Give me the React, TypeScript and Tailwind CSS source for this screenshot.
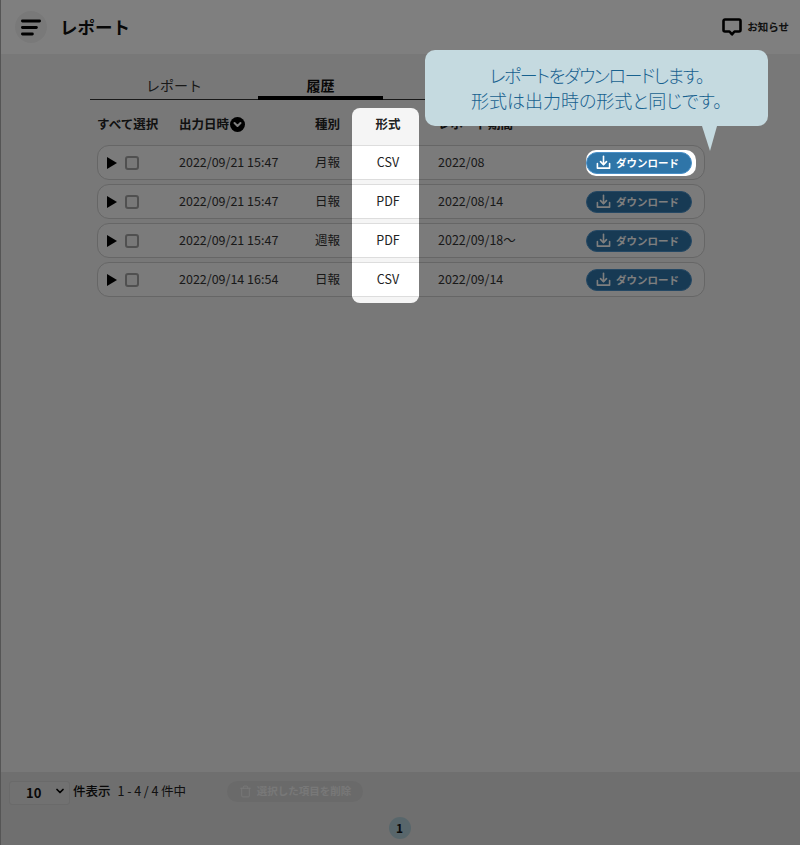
import React from 'react';
import { ChevronDown, Trash } from 'lucide-react';

const rows = [
  { date: '2022/09/21 15:47', kind: '月報', format: 'CSV', period: '2022/08' },
  { date: '2022/09/21 15:47', kind: '日報', format: 'PDF', period: '2022/08/14' },
  { date: '2022/09/21 15:47', kind: '週報', format: 'PDF', period: '2022/09/18〜' },
  { date: '2022/09/14 16:54', kind: '日報', format: 'CSV', period: '2022/09/14' },
];

const DownloadIcon = () => (
  <svg width="15" height="15" viewBox="0 0 16 16" fill="none" stroke="currentColor" strokeWidth="1.7" strokeLinecap="round" strokeLinejoin="round">
    <path d="M1.5 9v5h13V9" />
    <path d="M8 1.5v8.5" />
    <path d="M4.8 7L8 10.2 11.2 7" />
  </svg>
);

const DownloadButton = () => (
  <button className="flex h-[22px] w-[106px] items-center justify-center gap-[5px] rounded-full border border-[#4a90c8] bg-[#2f75a8] pr-[3px] text-[10.5px] font-bold text-white">
    <DownloadIcon />
    ダウンロード
  </button>
);

const App: React.FC = () => {
  return (
    <div className="relative flex h-[845px] w-[800px] flex-col overflow-hidden border-l border-[#555] bg-[#f0f0f0] text-[#222] [font-family:'Noto_Sans_CJK_JP','Noto_Sans',sans-serif]">
      {/* Header */}
      <header className="flex h-[54px] shrink-0 items-center justify-between bg-white pl-[14px] pr-[11px]">
        <div className="flex items-center gap-[13px]">
          <button className="flex h-[32px] w-[32px] items-center justify-center rounded-full bg-[#f3f3f3]">
            <svg width="20" height="17" viewBox="0 0 20 17" fill="none" stroke="#000" strokeWidth="2.8" strokeLinecap="round">
              <path d="M1.4 2h17.2" />
              <path d="M1.4 8.5h14" />
              <path d="M1.4 15h10" />
            </svg>
          </button>
          <h1 className="text-[17.5px] font-bold leading-none text-[#111]">レポート</h1>
        </div>
        <div className="flex items-center gap-[5px]">
          <svg width="20" height="18" viewBox="0 0 20 18" fill="none" stroke="#000" strokeWidth="2.6" strokeLinejoin="round">
            <path d="M3 1.5h14a1.5 1.5 0 0 1 1.5 1.5v9a1.5 1.5 0 0 1-1.5 1.5h-4.5L10 16.3 7.5 13.5H3A1.5 1.5 0 0 1 1.5 12V3A1.5 1.5 0 0 1 3 1.5z" />
          </svg>
          <span className="text-[10.5px] font-bold">お知らせ</span>
        </div>
      </header>

      {/* Main */}
      <main className="flex-1 pl-[89px] pr-[88px] pt-[20px]">
        <div className="flex h-[26px] border-b border-[#333]">
          <div className="w-[168px] text-center text-[14px] leading-[23px] text-[#333]">レポート</div>
          <div className="h-[26px] w-[125px] border-b-[4px] border-black text-center text-[14px] font-bold leading-[23px] text-[#111]">履歴</div>
        </div>

        <div className="relative mt-[8px] pl-[7px] pr-[7px]">
          <div className="flex h-[36px] items-center pb-[4px] text-[12.5px] font-bold text-[#222]">
            <div className="w-[82px]">すべて選択</div>
            <div className="flex w-[136px] items-center gap-[1px]">
              出力日時
              <svg width="15" height="15" viewBox="0 0 15 15">
                <circle cx="7.5" cy="7.5" r="7.5" fill="#000" />
                <path d="M4.5 6l3 3 3-3" fill="none" stroke="#fff" strokeWidth="2" strokeLinecap="round" strokeLinejoin="round" />
              </svg>
            </div>
            <div className="w-[37px]">種別</div>
            <div className="relative z-30 w-[67px] pl-[5px] text-center">形式</div>
            <div className="ml-[19px]">レポート期間</div>
          </div>

          <div className="mt-[1px] flex flex-col gap-[4px]">
            {rows.map((row, i) => (
              <div key={i} className="flex h-[35px] items-center rounded-[12px] border border-[#ccc] bg-[#f6f6f6] text-[12.5px] text-[#333]">
                <div className="flex w-[81px] items-center gap-[8px] pl-[9px]">
                  <svg width="10" height="12" viewBox="0 0 10 12">
                    <path d="M0 0l10 6-10 6z" fill="#000" />
                  </svg>
                  <span className="h-[14px] w-[14px] rounded-[3px] border-[2px] border-[#a0a0a0] bg-[#f0f0f0]" />
                </div>
                <div className="w-[136px]">{row.date}</div>
                <div className="w-[37px]">{row.kind}</div>
                <div className="relative z-30 flex h-[35px] w-[67px] shrink-0 items-center justify-center border-y border-[#ddd] bg-white pl-[5px] text-[#222]">
                  {row.format}
                </div>
                <div className="ml-[19px]">{row.period}</div>
                {i === 0 ? (
                  <div className="relative z-30 ml-auto mr-[8px] flex h-[26px] w-[110px] items-center rounded-[10px] bg-white">
                    <DownloadButton />
                  </div>
                ) : (
                  <div className="ml-auto mr-[12px]">
                    <DownloadButton />
                  </div>
                )}
              </div>
            ))}
          </div>

          {/* spotlight behind the 形式 column */}
          <div className="absolute left-[262px] top-0 z-20 h-[195px] w-[67px] rounded-[8px] bg-[#f5f5f5]" />
        </div>
      </main>

      {/* Footer */}
      <footer className="h-[73px] shrink-0 bg-[#dedede] pl-[8px]">
        <div className="flex items-center pt-[7px]">
          <div className="relative h-[24px] w-[61px]">
            <select className="h-[24px] w-[61px] appearance-none rounded-[3px] border border-[#d4d4d4] bg-[#e2e2e2] pl-[16px] text-[13px] font-bold text-[#111]" defaultValue="10">
              <option value="10">10</option>
            </select>
            <ChevronDown className="pointer-events-none absolute right-[4px] top-[6px] h-[12px] w-[12px] text-black" strokeWidth={3.5} />
          </div>
          <span className="ml-[3px] text-[12.5px] font-medium text-[#111]">件表示</span>
          <span className="ml-[7px] text-[12.5px] tracking-[-0.05px] text-[#222]">1 - 4 / 4 件中</span>
          <button className="ml-[41px] flex h-[21px] w-[136px] items-center justify-center gap-[5px] rounded-full bg-[#d4d4d4] text-[10.5px] font-bold text-[#f0f0f0]">
            <Trash className="h-[13px] w-[13px]" strokeWidth={1.8} />
            選択した項目を削除
          </button>
        </div>
        <div className="mt-[14px] flex justify-center pr-[10px]">
          <span className="flex h-[22px] w-[22px] items-center justify-center rounded-full bg-[#b0cdd6] text-[12px] font-bold text-[#111]">1</span>
        </div>
      </footer>

      {/* Dim layer */}
      <div className="absolute inset-0 z-10 bg-black/50" />

      {/* Tooltip */}
      <div className="absolute left-[424px] top-[50px] z-40 flex h-[76px] w-[343px] flex-col items-center justify-center rounded-[10px] bg-[#c5dae0] text-[18px] font-light leading-[25px] text-[#17618f] [font-feature-settings:'palt']">
        <p className="tracking-[-1.4px]">レポートをダウンロードします。</p>
        <p>形式は出力時の形式と同じです。</p>
        <svg className="absolute left-[277px] top-[76px]" width="16" height="26" viewBox="0 0 16 26">
          <path d="M0 0h15L8 25z" fill="#c5dae0" />
        </svg>
      </div>
    </div>
  );
};

export default App;
